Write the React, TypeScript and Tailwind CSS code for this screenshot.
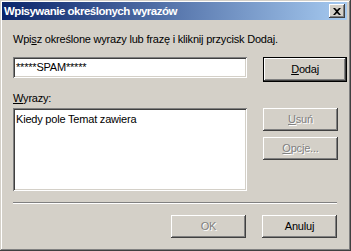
import React from "react";

const raised =
  "bg-[#d4d0c8] shadow-[inset_-1px_-1px_0_#404040,inset_1px_1px_0_#ffffff,inset_-2px_-2px_0_#808080,inset_2px_2px_0_#d4d0c8]";
const sunken =
  "bg-white shadow-[inset_1px_1px_0_#808080,inset_-1px_-1px_0_#ffffff,inset_2px_2px_0_#404040,inset_-2px_-2px_0_#d4d0c8]";
const disabledText = "text-[#808080] [text-shadow:1px_1px_0_#ffffff]";

function Btn({
  children,
  className = "",
  disabled,
}: {
  children: React.ReactNode;
  className?: string;
  disabled?: boolean;
}) {
  return (
    <div
      className={`flex items-center justify-center h-[23px] w-[75px] shrink-0 ${raised} ${
        disabled ? disabledText : "text-black"
      } ${className}`}
    >
      {children}
    </div>
  );
}

export default function App() {
  return (
    <div
      className="w-[351px] h-[251px] bg-[#d4d0c8] flex flex-col pl-[2px] pr-[4px] pt-[2px] shadow-[inset_-1px_-1px_0_#404040,inset_1px_1px_0_#d4d0c8,inset_-2px_-2px_0_#808080,inset_2px_2px_0_#ffffff] text-[11px] tracking-[-0.2px] leading-[13px]"
      style={{ fontFamily: '"Liberation Sans", Arial, sans-serif' }}
    >
      {/* Title bar */}
      <div className="h-[18px] flex items-center justify-between pl-[2px] pr-[2px] bg-[linear-gradient(to_right,#0a246a,#a6caf0)]">
        <div className="text-white font-bold text-[11.5px] tracking-[-0.5px]">
          Wpisywanie określonych wyrazów
        </div>
        <div className={`w-[16px] h-[14px] flex items-center justify-center ${raised}`}>
          <svg width="8" height="7" viewBox="0 0 8 7">
            <path d="M0 0h2l2 2 2-2h2L5 3.5 8 7H6L4 5 2 7H0l3-3.5z" fill="#000" />
          </svg>
        </div>
      </div>

      <div className="flex flex-col pl-[11px]">
        <div className="mt-[13px]">
          Wpi<span className="underline">s</span>z określone wyrazy lub frazę i kliknij przycisk Dodaj.
        </div>

        <div className="mt-[11px] flex items-start gap-[16px]">
          <div className={`w-[234px] h-[21px] flex items-center pl-[3px] ${sunken}`}>
            *****SPAM*****
          </div>
          <div className="shadow-[0_0_0_1px_#000] ml-[1px] mt-[1px]">
            <Btn className="w-[82px] h-[21px]">
              <span>
                <span className="underline">D</span>odaj
              </span>
            </Btn>
          </div>
        </div>

        <div className="mt-[11px]">
          <span className="underline">W</span>yrazy:
        </div>

        <div className="mt-[3px] flex items-start gap-[16px]">
          <div className={`w-[234px] h-[83px] pl-[3px] pt-[5px] ${sunken}`}>
            Kiedy pole Temat zawiera
          </div>
          <div className="flex flex-col gap-[6px]">
            <Btn disabled>
              <span>
                <span className="underline">U</span>suń
              </span>
            </Btn>
            <Btn disabled>
              <span>
                <span className="underline">O</span>pcje...
              </span>
            </Btn>
          </div>
        </div>

        <div className="mt-[11px] w-[324px] h-[2px] border-t border-t-[#808080] border-b border-b-white" />

        <div className="mt-[11px] w-[324px] flex justify-end gap-[16px]">
          <Btn disabled>OK</Btn>
          <Btn>Anuluj</Btn>
        </div>
      </div>
    </div>
  );
}
